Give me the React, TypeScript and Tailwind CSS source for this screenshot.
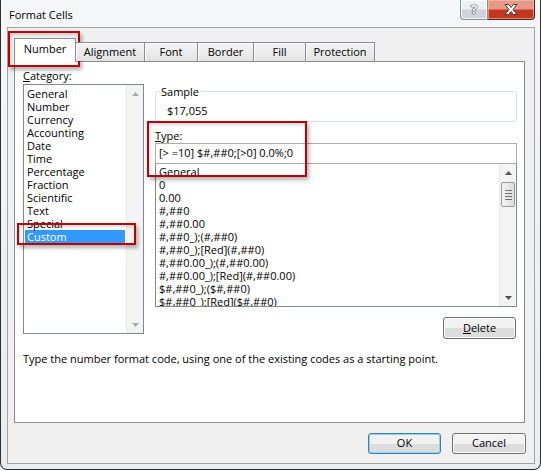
import type { ReactNode } from 'react'

const FONT = "font-['Segoe_UI','Open_Sans',sans-serif]"

const categories = [
  'General',
  'Number',
  'Currency',
  'Accounting',
  'Date',
  'Time',
  'Percentage',
  'Fraction',
  'Scientific',
  'Text',
  'Special',
  'Custom',
]

const formats = [
  'General',
  '0',
  '0.00',
  '#,##0',
  '#,##0.00',
  '#,##0_);(#,##0)',
  '#,##0_);[Red](#,##0)',
  '#,##0.00_);(#,##0.00)',
  '#,##0.00_);[Red](#,##0.00)',
  '$#,##0_);($#,##0)',
  '$#,##0_);[Red]($#,##0)',
]

const tabs = [
  { label: 'Number', w: 'w-[62px]' },
  { label: 'Alignment', w: 'w-[70px]' },
  { label: 'Font', w: 'w-[54px]' },
  { label: 'Border', w: 'w-[57px]' },
  { label: 'Fill', w: 'w-[53px]' },
  { label: 'Protection', w: 'w-[70px]' },
]

function Arrow({ up, color }: { up: boolean; color: string }) {
  return (
    <svg width="7" height="4" viewBox="0 0 7 4" className="block">
      <path d={up ? 'M0 4 L3.5 0 L7 4 Z' : 'M0 0 L7 0 L3.5 4 Z'} fill={color} />
    </svg>
  )
}

/** Windows 7 style vertical scrollbar; the thumb is optional (a list that fits has none). */
function ScrollBar({ thumb, color }: { thumb: boolean; color: string }) {
  return (
    <div className="flex h-full w-[17px] shrink-0 flex-col border-l border-[#ececec] bg-[#f3f3f3]">
      <div className="flex h-[17px] items-center justify-center">
        <Arrow up color={color} />
      </div>
      {thumb && (
        <div className="mx-[1px] mt-[1px] flex h-[25px] flex-col items-center justify-center gap-[2px] rounded-[2px] border border-[#9a9a9a] bg-gradient-to-r from-[#f4f4f4] to-[#dcdcdc]">
          <div className="h-px w-[7px] bg-[#6e6e6e]" />
          <div className="h-px w-[7px] bg-[#6e6e6e]" />
          <div className="h-px w-[7px] bg-[#6e6e6e]" />
          <div className="h-px w-[7px] bg-[#6e6e6e]" />
        </div>
      )}
      <div className="flex-1" />
      <div className="flex h-[17px] items-center justify-center">
        <Arrow up={false} color={color} />
      </div>
    </div>
  )
}

function Button({ children, isDefault = false, className = '' }: { children: ReactNode; isDefault?: boolean; className?: string }) {
  return (
    <button
      type="button"
      className={`flex items-center justify-center rounded-[3px] border bg-gradient-to-b from-[#f2f2f2] from-50% to-[#dcdcdc] to-50% text-[11px] text-black ${
        isDefault ? 'border-[#3c7fb1] shadow-[inset_0_0_0_1px_#8fd3f4]' : 'border-[#707070] shadow-[inset_0_0_0_1px_#fbfbfb]'
      } ${className}`}
    >
      {children}
    </button>
  )
}

/** The red callout boxes drawn over the dialog in the screenshot. */
function Callout({ className }: { className: string }) {
  return (
    <div
      className={`pointer-events-none absolute border-2 border-[#c00000] shadow-[2px_3px_4px_rgba(0,0,0,0.3),inset_1px_2px_3px_rgba(0,0,0,0.15)] ${className}`}
    />
  )
}

export default function App() {
  return (
    <div className={`relative h-[471px] w-[541px] overflow-hidden bg-white text-black ${FONT}`}>
      <div className="flex h-[470px] w-[541px] flex-col rounded-b-[7px] border-x border-b border-[#2f2f2f] bg-gradient-to-b from-[#f4f6f8] to-[#e9ecef]">
        {/* title bar */}
        <div className="flex h-[27px] shrink-0 items-start">
          <span className="pl-[8px] pt-[8px] text-[11px] leading-[14px]">Format Cells</span>
          <div className="ml-auto mr-[5px] flex h-[20px]">
            <div className="flex w-[28px] items-center justify-center rounded-bl-[4px] border border-t-0 border-[#8a8f96] bg-gradient-to-b from-[#eef1f4] from-45% to-[#cfd4da] to-55% shadow-[inset_0_0_0_1px_rgba(255,255,255,0.7)]">
              <span className="text-[13px] font-bold leading-none text-white [text-shadow:0_0_1px_#333,0_0_1px_#333,0_0_1px_#333]">?</span>
            </div>
            <div className="flex w-[47px] items-center justify-center rounded-br-[4px] border border-l-0 border-t-0 border-[#5a1f17] bg-gradient-to-b from-[#e49a87] from-45% to-[#c4361f] to-55% shadow-[inset_0_0_0_1px_rgba(255,190,175,0.6)]">
              <svg width="16" height="13" viewBox="0 0 16 13">
                <path
                  d="M2 1.5 L5.5 1.5 L8 4.5 L10.5 1.5 L14 1.5 L10 6.5 L14 11.5 L10.5 11.5 L8 8.5 L5.5 11.5 L2 11.5 L6 6.5 Z"
                  fill="#ffffff"
                  stroke="#3b3b3b"
                  strokeWidth="1"
                  strokeLinejoin="round"
                />
              </svg>
            </div>
          </div>
        </div>

        {/* dialog body */}
        <div className="mx-[6px] flex h-[437px] w-[528px] flex-col border border-[#a3a3a3] bg-[#f0f0f0] pl-[6px] pt-[10px]">
          <div className="relative z-10 flex h-[24px] items-end">
            {tabs.map((t, i) =>
              i === 0 ? (
                <div
                  key={t.label}
                  className={`relative z-10 flex h-[24px] items-center justify-center border-x border-t border-[#898c95] bg-white pb-[2px] text-[11px] ${t.w}`}
                >
                  {t.label}
                </div>
              ) : (
                <div
                  key={t.label}
                  className={`-ml-px mb-[1px] flex h-[19px] items-center justify-center border-x border-t border-[#898c95] bg-gradient-to-b from-[#f3f3f3] to-[#e3e3e3] text-[11px] shadow-[inset_1px_1px_0_#fbfbfb] ${t.w}`}
                >
                  {t.label}
                </div>
              ),
            )}
          </div>

          <div className="-mt-px flex h-[362px] w-[511px] flex-col border border-[#898c95] bg-white">
            <div className="flex">
              {/* category column */}
              <div className="ml-[8px] w-[121px]">
                <div className="mt-[7px] h-[13px] text-[11px] leading-[13px]">
                  <span className="underline">C</span>ategory:
                </div>
                <div className="mt-[2px] flex h-[250px] border border-[#828790]">
                  <div className="flex-1 pt-[2px]">
                    {categories.map((c) => (
                      <div
                        key={c}
                        className={`mx-[1px] h-[13px] pl-[2px] text-[11px] leading-[13px] ${c === 'Custom' ? 'bg-[#3399ff] text-white' : ''}`}
                      >
                        {c}
                      </div>
                    ))}
                  </div>
                  <ScrollBar thumb={false} color="#a9a9a9" />
                </div>
              </div>

              {/* format column */}
              <div className="ml-[11px] flex w-[362px] flex-col">
                <div className="relative mt-[29px] h-[31px] rounded-[3px] border border-[#d5dfe5] pl-[11px] pt-[12px] text-[11px] leading-[14px]">
                  <span className="absolute -top-[7px] left-[4px] bg-white px-[1px]">Sample</span>
                  $17,055
                </div>
                <div className="mt-[7px] h-[14px] text-[11px] leading-[14px]">
                  <span className="underline">T</span>ype:
                </div>
                <div className="flex h-[21px] items-center border border-[#abadb3] pl-[3px] text-[11px]">
                  [&gt; =10] $#,##0;[&gt;0] 0.0%;0
                </div>
                <div className="flex h-[143px] border border-t-0 border-[#828790]">
                  <div className="flex-1 overflow-hidden pt-[1px]">
                    {formats.map((f) => (
                      <div key={f} className="h-[13px] whitespace-nowrap pl-[3px] text-[11px] leading-[13px]">
                        {f}
                      </div>
                    ))}
                  </div>
                  <ScrollBar thumb color="#505050" />
                </div>
                <div className="mt-[10px] flex justify-end pr-px">
                  <Button className="h-[22px] w-[73px]">
                    <span>
                      <span className="underline">D</span>elete
                    </span>
                  </Button>
                </div>
              </div>
            </div>

            <div className="ml-[8px] mt-[13px] text-[11px] leading-[14px]">
              Type the number format code, using one of the existing codes as a starting point.
            </div>
          </div>

          <div className="mt-[10px] flex justify-end gap-[11px] pr-[8px]">
            <Button isDefault className="h-[21px] w-[73px]">
              OK
            </Button>
            <Button className="h-[21px] w-[74px]">Cancel</Button>
          </div>
        </div>
      </div>

      <Callout className="left-[8px] top-[31px] h-[36px] w-[72px]" />
      <Callout className="left-[147px] top-[121px] h-[56px] w-[160px]" />
      <Callout className="left-[17px] top-[223px] h-[22px] w-[119px]" />
    </div>
  )
}
